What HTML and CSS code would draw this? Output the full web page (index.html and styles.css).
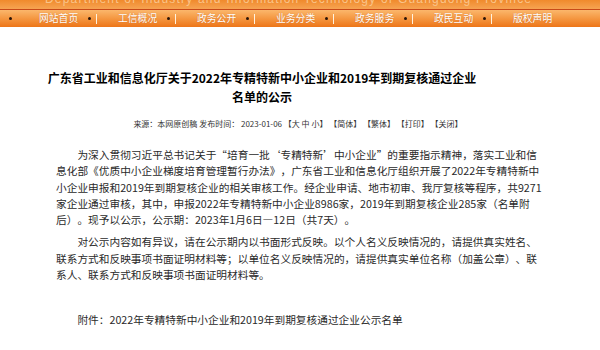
FILE: index.html
```html
<!DOCTYPE html>
<html lang="zh-CN">
<head>
  <meta charset="UTF-8" />
  <meta name="viewport" content="width=device-width, initial-scale=1.0"/>
  <title>广东省工业和信息化厅</title>
  <link rel="stylesheet" href="styles.css">
</head>
<body>

  <header>
    <div class="banner">
      <span>Department of Industry and Information Technology of Guangdong Province</span>
    </div>
    <nav>
      <ul>
        <li class="first"><i class="dot"></i><i class="bar"></i><a href="#">网站首页</a></li>
        <li><i class="dot"></i><i class="bar"></i><a href="#">工信概况</a></li>
        <li><i class="dot"></i><i class="bar"></i><a href="#">政务公开</a></li>
        <li><i class="dot"></i><i class="bar"></i><a href="#">业务分类</a></li>
        <li><i class="dot"></i><i class="bar"></i><a href="#">政务服务</a></li>
        <li><i class="dot"></i><i class="bar"></i><a href="#">政民互动</a></li>
        <li><i class="dot"></i><i class="bar"></i><a href="#">版权声明</a></li>
      </ul>
    </nav>
  </header>

  <div class="article">
    <h1>广东省工业和信息化厅关于2022年专精特新中小企业和2019年到期复核通过企业名单的公示</h1>
    <div class="meta">
      来源：本网原创稿 发布时间： 2023-01-06 <a href="#">【大 中 小】</a> <a href="#">【简体】</a> <a href="#">【繁体】</a> <a href="#">【打印】</a> <a href="#">【关闭】</a>
    </div>

    <div class="content">
      <p>为深入贯彻习近平总书记关于“培育一批‘专精特新’中小企业”的重要指示精神，落实工业和信息化部《优质中小企业梯度培育管理暂行办法》，广东省工业和信息化厅组织开展了2022年专精特新中小企业申报和2019年到期复核企业的相关审核工作。经企业申请、地市初审、我厅复核等程序，共9271家企业通过审核，其中，申报2022年专精特新中小企业8986家，2019年到期复核企业285家（名单附后）。现予以公示，公示期：2023年1月6日—12日（共7天）。</p>
      <p>对公示内容如有异议，请在公示期内以书面形式反映。以个人名义反映情况的，请提供真实姓名、联系方式和反映事项书面证明材料等；以单位名义反映情况的，请提供真实单位名称（加盖公章）、联系人、联系方式和反映事项书面证明材料等。</p>
      <p>&nbsp;</p>
      <p>附件：<a href="#">2022年专精特新中小企业和2019年到期复核通过企业公示名单</a></p>
    </div>
  </div>

</body>
</html>
```

FILE: styles.css
```css
body {
  margin: 0;
  font-family: 'Noto Sans CJK SC', sans-serif;
  background-color: white;
  color: #222;
}

a {
  color: inherit;
  text-decoration: none;
}

.banner {
  height: 9px;
  overflow: hidden;
  background: linear-gradient(to bottom, #f08a2c, #f6a452);
  border-bottom: 1px solid #c94a17;
}

.banner span {
  display: block;
  margin-top: -7px;
  padding-left: 45px;
  font-family: 'Liberation Sans', sans-serif;
  font-size: 12px;
  line-height: 12px;
  letter-spacing: 1.2px;
  color: #f9c48a;
}

nav {
  height: 17px;
  background: linear-gradient(to bottom, #fbb76c, #f59a45 45%, #ed7518);
}

nav ul {
  list-style: none;
  margin: 0;
  padding: 0 0 0 9px;
  display: flex;
}

nav li {
  width: 79px;
  height: 17px;
  display: flex;
  align-items: center;
}

nav .dot {
  width: 3px;
  height: 3px;
  border-radius: 50%;
  background-color: #2a1408;
  margin-right: 5px;
}

nav .bar {
  width: 1px;
  height: 10px;
  background-color: #fff3e0;
  margin-right: 21px;
}

nav li.first .bar {
  visibility: hidden;
}

nav a {
  color: white;
  font-size: 9.8px;
  line-height: 17px;
  white-space: nowrap;
  text-shadow: 0 0 1px rgba(160, 60, 0, 0.5);
}

.article {
  width: 486px;
  margin-left: 56px;
}

.article h1 {
  width: 430px;
  margin: 0 0 0 -9px;
  padding-top: 41px;
  text-align: center;
  font-size: 12px;
  line-height: 19px;
  font-weight: bold;
  color: #000;
}

.meta {
  margin-top: 12px;
  text-align: center;
  font-size: 8px;
  line-height: 12px;
  color: #333;
  padding-right: 2px;
}

.content {
  margin-top: 17px;
  font-size: 10.7px;
  line-height: 16.3px;
  color: #2a2a2a;
  text-spacing-trim: space-all;
}

.content p {
  margin: 0 0 6px;
  text-indent: 2em;
}
```
